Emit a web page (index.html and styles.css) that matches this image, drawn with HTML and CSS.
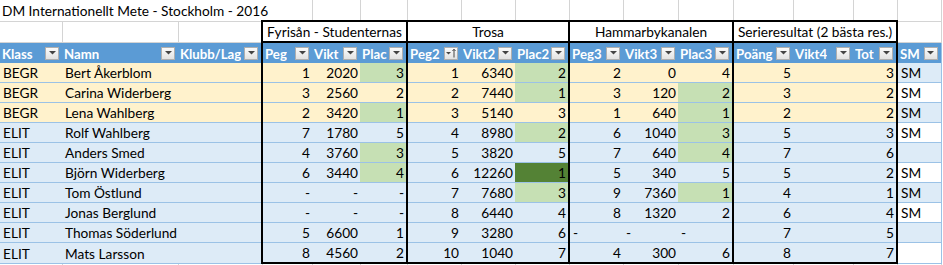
FILE: index.html
```html
<!DOCTYPE html>
<html lang="sv">
<head>
<meta charset="utf-8">
<title>DM Internationellt Mete - Stockholm - 2016</title>
<link rel="stylesheet" href="styles.css">
</head>
<body>
<table class="sheet">
  <colgroup>
    <col class="w-klass"><col class="w-namn"><col class="w-klubb">
    <col class="w-peg"><col class="w-vikt"><col class="w-plac">
    <col class="w-peg2"><col class="w-vikt2"><col class="w-plac2">
    <col class="w-peg3"><col class="w-vikt3"><col class="w-plac3">
    <col class="w-poang"><col class="w-vikt4"><col class="w-tot">
    <col class="w-sm">
  </colgroup>
  <tbody>
    <tr class="r-title">
      <td class="title" colspan="4">DM Internationellt Mete - Stockholm - 2016</td>
      <td></td><td></td><td></td><td></td><td></td><td></td><td></td><td></td><td></td><td></td><td></td><td></td>
    </tr>
    <tr class="r-group">
      <td></td><td></td><td></td>
      <td class="grp" colspan="3">Fyrisån - Studenternas</td>
      <td class="grp" colspan="3">Trosa</td>
      <td class="grp" colspan="3">Hammarbykanalen</td>
      <td class="grp" colspan="3">Serieresultat (2 bästa res.)</td>
      <td></td>
    </tr>
    <tr class="r-head">
      <th><div class="hd"><span>Klass</span><span class="fb"><svg width="7" height="4" viewBox="0 0 7 4"><path d="M0 0H7L3.5 3.6Z"/></svg></span></div></th>
      <th><div class="hd"><span>Namn</span><span class="fb"><svg width="7" height="4" viewBox="0 0 7 4"><path d="M0 0H7L3.5 3.6Z"/></svg></span></div></th>
      <th><div class="hd"><span>Klubb/Lag</span><span class="fb"><svg width="7" height="4" viewBox="0 0 7 4"><path d="M0 0H7L3.5 3.6Z"/></svg></span></div></th>
      <th class="gl"><div class="hd"><span>Peg</span><span class="fb"><svg width="7" height="4" viewBox="0 0 7 4"><path d="M0 0H7L3.5 3.6Z"/></svg></span></div></th>
      <th><div class="hd"><span>Vikt</span><span class="fb"><svg width="7" height="4" viewBox="0 0 7 4"><path d="M0 0H7L3.5 3.6Z"/></svg></span></div></th>
      <th class="gr"><div class="hd"><span>Plac</span><span class="fb"><svg width="7" height="4" viewBox="0 0 7 4"><path d="M0 0H7L3.5 3.6Z"/></svg></span></div></th>
      <th class="gl"><div class="hd"><span>Peg2</span><span class="fb"><svg width="11" height="10" viewBox="0 0 11 10"><path d="M0 4H5L2.5 6.6Z"/><path d="M8 9.5V1.5M6.5 3L8 1.2L9.5 3" fill="none" stroke="#444" stroke-width="1"/></svg></span></div></th>
      <th><div class="hd"><span>Vikt2</span><span class="fb"><svg width="7" height="4" viewBox="0 0 7 4"><path d="M0 0H7L3.5 3.6Z"/></svg></span></div></th>
      <th class="gr"><div class="hd"><span>Plac2</span><span class="fb"><svg width="7" height="4" viewBox="0 0 7 4"><path d="M0 0H7L3.5 3.6Z"/></svg></span></div></th>
      <th class="gl"><div class="hd"><span>Peg3</span><span class="fb"><svg width="7" height="4" viewBox="0 0 7 4"><path d="M0 0H7L3.5 3.6Z"/></svg></span></div></th>
      <th><div class="hd"><span>Vikt3</span><span class="fb"><svg width="7" height="4" viewBox="0 0 7 4"><path d="M0 0H7L3.5 3.6Z"/></svg></span></div></th>
      <th class="gr"><div class="hd"><span>Plac3</span><span class="fb"><svg width="7" height="4" viewBox="0 0 7 4"><path d="M0 0H7L3.5 3.6Z"/></svg></span></div></th>
      <th class="gl"><div class="hd"><span>Poäng</span><span class="fb"><svg width="7" height="4" viewBox="0 0 7 4"><path d="M0 0H7L3.5 3.6Z"/></svg></span></div></th>
      <th><div class="hd"><span>Vikt4</span><span class="fb"><svg width="7" height="4" viewBox="0 0 7 4"><path d="M0 0H7L3.5 3.6Z"/></svg></span></div></th>
      <th class="gr"><div class="hd"><span>Tot</span><span class="fb"><svg width="7" height="4" viewBox="0 0 7 4"><path d="M0 0H7L3.5 3.6Z"/></svg></span></div></th>
      <th class="sm"><div class="hd"><span>SM</span><span class="fb"><svg width="7" height="4" viewBox="0 0 7 4"><path d="M0 0H7L3.5 3.6Z"/></svg></span></div></th>
    </tr>
    <tr class="r begr">
      <td>BEGR</td><td>Bert Åkerblom</td><td></td>
      <td class="n gl">1</td><td class="n">2020</td><td class="n gr g">3</td>
      <td class="n gl">1</td><td class="n">6340</td><td class="n gr g">2</td>
      <td class="n gl">2</td><td class="n">0</td><td class="n gr">4</td>
      <td class="n gl">5</td><td></td><td class="n gr">3</td>
      <td class="sm smb">SM</td>
    </tr>
    <tr class="r begr">
      <td>BEGR</td><td>Carina Widerberg</td><td></td>
      <td class="n gl">3</td><td class="n">2560</td><td class="n gr">2</td>
      <td class="n gl">2</td><td class="n">7440</td><td class="n gr g">1</td>
      <td class="n gl">3</td><td class="n">120</td><td class="n gr g">2</td>
      <td class="n gl">3</td><td></td><td class="n gr">2</td>
      <td class="sm smw">SM</td>
    </tr>
    <tr class="r begr">
      <td>BEGR</td><td>Lena Wahlberg</td><td></td>
      <td class="n gl">2</td><td class="n">3420</td><td class="n gr g">1</td>
      <td class="n gl">3</td><td class="n">5140</td><td class="n gr">3</td>
      <td class="n gl">1</td><td class="n">640</td><td class="n gr g">1</td>
      <td class="n gl">2</td><td></td><td class="n gr">2</td>
      <td class="sm smb">SM</td>
    </tr>
    <tr class="r elit">
      <td>ELIT</td><td>Rolf Wahlberg</td><td></td>
      <td class="n gl">7</td><td class="n">1780</td><td class="n gr">5</td>
      <td class="n gl">4</td><td class="n">8980</td><td class="n gr g">2</td>
      <td class="n gl">6</td><td class="n">1040</td><td class="n gr g">3</td>
      <td class="n gl">5</td><td></td><td class="n gr">3</td>
      <td class="sm smw">SM</td>
    </tr>
    <tr class="r elit">
      <td>ELIT</td><td>Anders Smed</td><td></td>
      <td class="n gl">4</td><td class="n">3760</td><td class="n gr g">3</td>
      <td class="n gl">5</td><td class="n">3820</td><td class="n gr">5</td>
      <td class="n gl">7</td><td class="n">640</td><td class="n gr g">4</td>
      <td class="n gl">7</td><td></td><td class="n gr">6</td>
      <td class="sm smb"></td>
    </tr>
    <tr class="r elit">
      <td>ELIT</td><td>Björn Widerberg</td><td></td>
      <td class="n gl">6</td><td class="n">3440</td><td class="n gr g">4</td>
      <td class="n gl">6</td><td class="n">12260</td><td class="n gr dg">1</td>
      <td class="n gl">5</td><td class="n">340</td><td class="n gr">5</td>
      <td class="n gl">5</td><td></td><td class="n gr">2</td>
      <td class="sm smw">SM</td>
    </tr>
    <tr class="r elit">
      <td>ELIT</td><td>Tom Östlund</td><td></td>
      <td class="n gl">-</td><td class="n">-</td><td class="n gr">-</td>
      <td class="n gl">7</td><td class="n">7680</td><td class="n gr g">3</td>
      <td class="n gl">9</td><td class="n">7360</td><td class="n gr g">1</td>
      <td class="n gl">4</td><td></td><td class="n gr">1</td>
      <td class="sm smb">SM</td>
    </tr>
    <tr class="r elit">
      <td>ELIT</td><td>Jonas Berglund</td><td></td>
      <td class="n gl">-</td><td class="n">-</td><td class="n gr">-</td>
      <td class="n gl">8</td><td class="n">6440</td><td class="n gr">4</td>
      <td class="n gl">8</td><td class="n">1320</td><td class="n gr">2</td>
      <td class="n gl">6</td><td></td><td class="n gr">4</td>
      <td class="sm smw">SM</td>
    </tr>
    <tr class="r elit">
      <td>ELIT</td><td>Thomas Söderlund</td><td></td>
      <td class="n gl">5</td><td class="n">6600</td><td class="n gr">1</td>
      <td class="n gl">9</td><td class="n">3280</td><td class="n gr">6</td>
      <td class="gl">-</td><td>-</td><td class="gr">-</td>
      <td class="n gl">7</td><td></td><td class="n gr">5</td>
      <td class="sm smb"></td>
    </tr>
    <tr class="r elit last">
      <td>ELIT</td><td>Mats Larsson</td><td></td>
      <td class="n gl b">8</td><td class="n b">4560</td><td class="n gr b">2</td>
      <td class="n gl b">10</td><td class="n b">1040</td><td class="n gr b">7</td>
      <td class="n gl b">4</td><td class="n b">300</td><td class="n gr b">6</td>
      <td class="n gl b">8</td><td class="b"></td><td class="n gr b">7</td>
      <td class="sm smw"></td>
    </tr>
    <tr class="r-tail">
      <td></td><td></td><td></td><td></td><td></td><td></td><td></td><td></td>
      <td></td><td></td><td></td><td></td><td></td><td></td><td></td><td></td>
    </tr>
  </tbody>
</table>
</body>
</html>
```

FILE: styles.css
```css
html, body {
  margin: 0;
  padding: 0;
  background: #ffffff;
  overflow: hidden;
}

.sheet {
  border-collapse: collapse;
  table-layout: fixed;
  width: 941px;
  font-family: Lato, "Noto Sans", sans-serif;
  font-size: 13.7px;
  color: #000;
}

.w-klass { width: 62px; }
.w-namn { width: 116px; }
.w-klubb { width: 84px; }
.w-peg { width: 50px; }
.w-vikt { width: 48px; }
.w-plac { width: 47px; }
.w-peg2 { width: 54px; }
.w-vikt2 { width: 54px; }
.w-plac2 { width: 54px; }
.w-peg3 { width: 54px; }
.w-vikt3 { width: 55px; }
.w-plac3 { width: 55px; }
.w-poang { width: 60px; }
.w-vikt4 { width: 60px; }
.w-tot { width: 44px; }
.w-sm { width: 44px; }

.sheet td,
.sheet th {
  padding: 0 3px;
  height: 19px;
  line-height: 19px;
  vertical-align: bottom;
  white-space: nowrap;
  overflow: visible;
  font-weight: normal;
  text-align: left;
}

/* row 1: title */
.r-title td {
  height: 20px;
  border-right: 1px solid #d4d4d4;
  border-bottom: 1px solid #d4d4d4;
}
.r-title .title {
  padding-left: 2px;
}

/* row 2: group headings */
.r-group td {
  height: 19px;
  border-right: 1px solid #d4d4d4;
  border-bottom: 1px solid #d4d4d4;
}
.r-group .grp {
  border: 2px solid #000;
  text-align: center;
  padding: 0 1px;
}

/* table header */
.r-head th {
  background: #5b9bd5;
  color: #fff;
  font-weight: bold;
  font-size: 13.2px;
  height: 20px;
  padding: 0;
  overflow: hidden;
}
.hd {
  display: flex;
  align-items: center;
  justify-content: space-between;
  height: 20px;
  padding: 0 3px 0 2px;
  overflow: hidden;
}
.hd span:first-child {
  min-width: 0;
  overflow: hidden;
  line-height: 20px;
  padding-top: 1px;
}
.fb {
  flex: none;
  box-sizing: border-box;
  width: 14px;
  height: 13px;
  margin-left: 2px;
  border: 1px solid #afafaf;
  background: linear-gradient(#fbfbfb, #e2e2e2);
  display: flex;
  align-items: center;
  justify-content: center;
}
.fb svg {
  fill: #444;
}

/* data rows */
.r td {
  border-bottom: 1px solid #9bc2e6;
}
.r.begr td {
  background: #fff2cc;
}
.r.elit td {
  background: #ddebf7;
}
.sheet td.n {
  text-align: right;
  padding-right: 2px;
}
.r td.g {
  background: #c6e0b4;
}
.r td.dg {
  background: #548235;
}
.r td.smb {
  background: #ddebf7;
}
.r td.smw {
  background: #ffffff;
}
.sheet .sm {
  border-right: 1px solid #9bc2e6;
}

/* group boxes */
.sheet .gl {
  border-left: 2px solid #000;
}
.sheet .gr {
  border-right: 2px solid #000;
}
.r td.b {
  border-bottom: 2px solid #000;
}

/* sheet below the table */
.r-tail td {
  border-right: 1px solid #d4d4d4;
  border-bottom: 1px solid #d4d4d4;
}
```
